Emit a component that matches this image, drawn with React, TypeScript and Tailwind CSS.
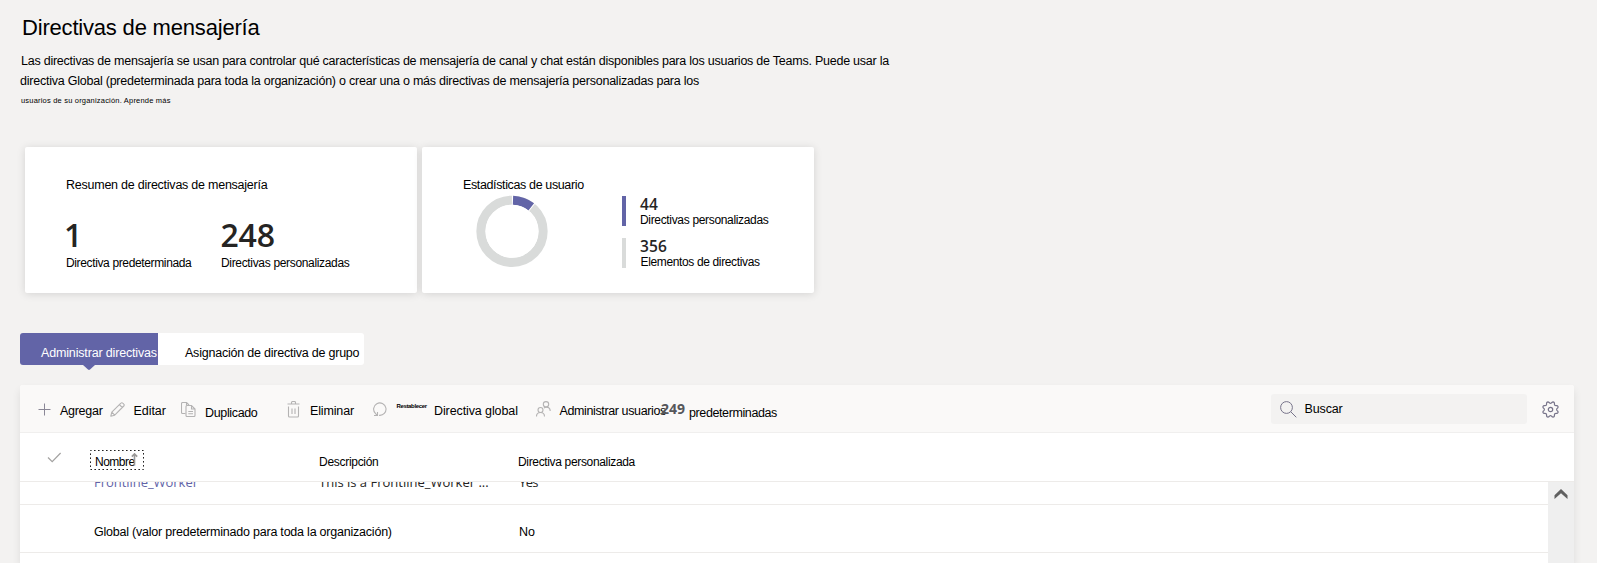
import type { ReactNode } from "react";

type IconProps = { className?: string };

const PlusIcon = ({ className = "" }: IconProps) => (
  <svg className={`h-[13px] w-[13px] shrink-0 ${className}`} viewBox="0 0 13 13" fill="none" stroke="currentColor">
    <path d="M6.5 0.5v12M0.5 6.5h12" />
  </svg>
);

const PencilIcon = ({ className = "" }: IconProps) => (
  <svg className={`h-[15px] w-[15px] shrink-0 ${className}`} viewBox="0 0 15 15" fill="none" stroke="currentColor" strokeWidth="1.1">
    <path d="M0.8 14.2l1-4L10.9 1.1a1.3 1.3 0 0 1 1.9 0l1 1a1.3 1.3 0 0 1 0 1.9L4.7 13.2zM9.4 2.6l2.9 2.9M1.8 10.2l2.9 3" strokeLinejoin="round" />
  </svg>
);

const CopyIcon = ({ className = "" }: IconProps) => (
  <svg className={`h-[15px] w-[15px] shrink-0 ${className}`} viewBox="0 0 15 15" fill="none" stroke="currentColor" strokeWidth="1.1">
    <path d="M4.5 11.5H1.5a1 1 0 0 1-1-1v-9a1 1 0 0 1 1-1h4l2.5 2.5M5.5 0.5V3.5" />
    <path d="M6 3.500h4.500l3.500 3.500v6.500a1 1 0 0 1-1 1H6a1 1 0 0 1-1-1v-9a1 1 0 0 1 1-1zM10.500 3.500V7H14M7.300 9.500h4.700M7.300 11.700h4.700" />
  </svg>
);

const TrashIcon = ({ className = "" }: IconProps) => (
  <svg className={`h-[17px] w-[13px] shrink-0 ${className}`} viewBox="0 0 13 17" fill="none" stroke="currentColor" strokeWidth="1.1">
    <path d="M0.500 3h12M4.500 3V1.500a1 1 0 0 1 1-1h2a1 1 0 0 1 1 1V3M1.500 5.500v9.500a1 1 0 0 0 1 1h8a1 1 0 0 0 1-1V5.500M5 7.500v5.500M8 7.500v5.500" />
  </svg>
);

const ResetIcon = ({ className = "" }: IconProps) => (
  <svg className={`h-[15px] w-[15px] shrink-0 ${className}`} viewBox="0 0 15 15" fill="none" stroke="currentColor" strokeWidth="1.1">
    <path d="M6 13.300a6.200 6.200 0 1 0-3.400-1.600L4 13.200" />
    <path d="M1 13.500h3.500V10" />
  </svg>
);

const PeopleIcon = ({ className = "" }: IconProps) => (
  <svg className={`h-[16px] w-[15px] shrink-0 ${className}`} viewBox="0 0 15 16" fill="none" stroke="currentColor" strokeWidth="1.1">
    <circle cx="10" cy="3.300" r="2.700" />
    <circle cx="4.500" cy="9" r="2.500" />
    <path d="M0.500 15.500c0-2.600 1.600-4 4-4s4 1.400 4 4M8 7c0.600-0.600 1.300-0.900 2.200-0.900 2.500 0 4 1.400 4 4" />
  </svg>
);

const SearchIcon = ({ className = "" }: IconProps) => (
  <svg className={`h-[17px] w-[17px] shrink-0 ${className}`} viewBox="0 0 17 17" fill="none" stroke="currentColor">
    <circle cx="6.500" cy="6.500" r="5.900" />
    <path d="M10.800 10.800l5.500 5.500" />
  </svg>
);

const GEAR_OUTLINE = Array.from({ length: 96 }, (_, i) => {
  const angle = (i / 96) * Math.PI * 2;
  const wave = Math.cos(8 * angle);
  const radius = 7.1 - 0.95 * Math.sign(wave) * Math.pow(Math.abs(wave), 0.6);
  return `${(8.5 + radius * Math.cos(angle)).toFixed(2)},${(8.5 + radius * Math.sin(angle)).toFixed(2)}`;
}).join(" ");

const GearIcon = ({ className = "" }: IconProps) => (
  <svg className={`h-[17px] w-[17px] shrink-0 ${className}`} viewBox="0 0 17 17" fill="none" stroke="currentColor" strokeWidth="1.2" strokeLinejoin="round">
    <circle cx="8.5" cy="8.5" r="2.2" />
    <polygon points={GEAR_OUTLINE} />
  </svg>
);

const CheckIcon = ({ className = "" }: IconProps) => (
  <svg className={`h-[11px] w-[15px] ${className}`} viewBox="0 0 15 11" fill="none" stroke="currentColor" strokeWidth="1.200">
    <path d="M1 5.500l4.200 4.200L13.600 1" />
  </svg>
);

const SortIcon = ({ className = "" }: IconProps) => (
  <svg className={`h-[13px] w-[7px] ${className}`} viewBox="0 0 7 13" fill="none" stroke="currentColor" strokeWidth="1.600">
    <path d="M3.500 12.500V1M0.800 3.600L3.500 0.900l2.700 2.700" />
  </svg>
);

function Donut() {
  return (
    <svg className="ml-[13px] h-[72px] w-[72px]" viewBox="0 0 72 72" fill="none">
      <circle cx="36" cy="36.300" r="31.100" stroke="#d9dbda" strokeWidth="9.100" />
      <path d="M36.500 36.300L36.500 0M36 36.300L59.400 7.400" stroke="#fff" strokeWidth="1.200" />
      <path d="M37 5.200A31.100 31.100 0 0 1 55.200 11.900" stroke="#6264a7" strokeWidth="9.100" />
      <circle cx="36" cy="36.300" r="26.500" fill="#fff" />
    </svg>
  );
}

function Legend({ value, label, bar, labelClass }: { value: string; label: string; bar: string; labelClass: string }) {
  return (
    <div className="flex h-[30px]">
      <div className={`h-[30px] w-[4px] ${bar}`} />
      <div className="ml-[14px]">
        <div className="font-['Open_Sans',sans-serif] text-[15.5px] leading-[17px] font-semibold tracking-[0.1px] text-[#252423]">{value}</div>
        <div className={`text-[12px] leading-[15px] ${labelClass}`}>{label}</div>
      </div>
    </div>
  );
}

function Action({ icon, label, cell, text }: { icon?: ReactNode; label: string; cell: string; text: string }) {
  return (
    <div className={`flex shrink-0 items-start text-[#b4b3b3] ${cell}`}>
      {icon}
      <span className={`text-black ${text}`}>{label}</span>
    </div>
  );
}

const COLUMNS = "grid grid-cols-[74px_225px_199px_1fr]";

export default function App() {
  return (
    <div className="h-[563px] w-full overflow-hidden bg-[#f3f2f1] pt-[12px] pl-[20px] font-['Liberation_Sans',sans-serif] text-[12.5px] leading-[20px] whitespace-nowrap text-black">
      <h1 className="ml-[2px] text-[22px] leading-[32px] tracking-[-0.19px]">Directivas de mensajería</h1>
      <p className="mt-[7px] ml-[1px] tracking-[-0.235px]">
        Las directivas de mensajería se usan para controlar qué características de mensajería de canal y chat están disponibles para los usuarios de Teams. Puede usar la
      </p>
      <p className="tracking-[-0.23px]">
        directiva Global (predeterminada para toda la organización) o crear una o más directivas de mensajería personalizadas para los
      </p>
      <p className="mt-[1px] ml-[1px] pt-[1px] text-[7.5px] leading-[15px] tracking-[0.196px]">usuarios de su organización. Aprende más</p>

      <section className="mt-[39px] ml-[5px] flex h-[146px] gap-[5px]">
        <div className="w-[392px] rounded-[2px] bg-white pt-[28px] pl-[41px] shadow-[0_1px_9px_rgba(0,0,0,0.13)]">
          <div className="tracking-[-0.24px]">Resumen de directivas de mensajería</div>
          <div className="mt-[22px] flex">
            <div className="w-[155px]">
              <div className="-ml-[2px] font-['Open_Sans',sans-serif] text-[32px] leading-[36px] font-semibold text-[#252423]">1</div>
              <div className="text-[12px] tracking-[-0.36px]">Directiva predeterminada</div>
            </div>
            <div>
              <div className="-ml-[0.5px] font-['Open_Sans',sans-serif] text-[32px] leading-[36px] font-semibold tracking-[-0.2px] text-[#252423]">248</div>
              <div className="text-[12px] tracking-[-0.33px]">Directivas personalizadas</div>
            </div>
          </div>
        </div>
        <div className="w-[392px] rounded-[2px] bg-white pt-[28px] pl-[41px] shadow-[0_1px_9px_rgba(0,0,0,0.13)]">
          <div className="tracking-[-0.37px]">Estadísticas de usuario</div>
          <div className="flex">
            <Donut />
            <div className="mt-[1px] ml-[74px] flex flex-col gap-[12px]">
              <Legend value="44" label="Directivas personalizadas" bar="bg-[#6264a7]" labelClass="tracking-[-0.33px]" />
              <Legend value="356" label="Elementos de directivas" bar="bg-[#d9dbda]" labelClass="ml-[0.5px] tracking-[-0.36px]" />
            </div>
          </div>
        </div>
      </section>

      <nav className="mt-[40px] flex h-[32px]">
        <div className="relative w-[138px] rounded-l-[3px] bg-[#6264a7] pt-[10px] pl-[21px] tracking-[-0.16px] text-white">
          Administrar directivas
          <svg className="absolute top-[32px] left-[63px] h-[5px] w-[12px]" viewBox="0 0 12 5">
            <path d="M0 0h12L7 4.500q-1 0.800-2 0z" fill="#6264a7" />
          </svg>
        </div>
        <div className="w-[206px] rounded-r-[3px] bg-white pt-[10px] pl-[27px] tracking-[-0.22px]">Asignación de directiva de grupo</div>
      </nav>

      <section className="mt-[20px] w-[1554px] rounded-t-[3px] bg-white shadow-[0_5px_8px_rgba(0,0,0,0.09)]">
        <div className="flex h-[48px] items-start rounded-t-[3px] border-b border-[#f0efee] bg-[#faf9f8] pl-[17.5px]">
          <Action icon={<PlusIcon className="mt-[18px] text-[#8a8796]" />} label="Agregar" cell="w-[72px]" text="mt-[16px] ml-[9.5px] tracking-[-0.28px]" />
          <Action icon={<PencilIcon className="mt-[17px]" />} label="Editar" cell="w-[71px]" text="mt-[16px] ml-[9px] tracking-[-0.05px]" />
          <Action icon={<CopyIcon className="mt-[17px]" />} label="Duplicado" cell="w-[106px]" text="mt-[18px] ml-[9.5px] tracking-[-0.35px]" />
          <Action icon={<TrashIcon className="mt-[16px]" />} label="Eliminar" cell="w-[86px]" text="mt-[16px] ml-[10.5px] tracking-[-0.15px]" />
          <Action icon={<ResetIcon className="mt-[17px]" />} label="Restablecer" cell="w-[60px]" text="mt-[16px] ml-[9px] text-[6px] leading-[10px] font-bold tracking-[-0.35px]" />
          <Action label="Directiva global" cell="w-[103px]" text="mt-[16px] ml-[1.5px] tracking-[-0.1px]" />
          <Action icon={<PeopleIcon className="mt-[16px]" />} label="Administrar usuarios" cell="w-[125.5px]" text="mt-[16px] ml-[9px] tracking-[-0.38px]" />
          <span className="mt-[14px] w-[28px] font-['Open_Sans',sans-serif] text-[14px] font-bold text-[#56575b]">249</span>
          <span className="mt-[18px] tracking-[-0.39px]">predeterminadas</span>
          <div className="mt-[9px] mr-[15px] ml-auto flex h-[30px] w-[256px] items-start rounded-[3px] bg-[#f3f2f1] text-[#77748a]">
            <SearchIcon className="mt-[7px] ml-[9px]" />
            <span className="mt-[5px] ml-[8px] tracking-[-0.13px] text-black">Buscar</span>
          </div>
          <GearIcon className="mt-[16px] mr-[15.5px] text-[#77748a]" />
        </div>

        <div className={`h-[49px] border-b border-[#edebe9] text-[12px] ${COLUMNS}`}>
          <CheckIcon className="mt-[19px] ml-[27px] text-[#a3a2a1]" />
          <div className="relative mt-[17px] -ml-[4px] h-[20px] w-[54px] pt-[2px] pl-[5px] tracking-[-0.5px]">
            Nombre
            <svg className="absolute inset-0 h-[20px] w-[54px]" viewBox="0 0 54 20" fill="none">
              <rect x="0.5" y="0.5" width="53" height="19" stroke="#222" strokeDasharray="1.6 2.4" strokeDashoffset="0.5" />
            </svg>
            <SortIcon className="absolute top-[3px] left-[41px] text-[#9a9897]" />
          </div>
          <div className="mt-[19px] tracking-[-0.29px]">Descripción</div>
          <div className="mt-[19px] tracking-[-0.34px]">Directiva personalizada</div>
        </div>

        <div className="flex h-[81px] overflow-hidden">
          <div className="flex-1">
            <div className={`h-[23px] overflow-hidden border-b border-[#edebe9] font-['Open_Sans',sans-serif] text-[13px] text-[#252423] ${COLUMNS}`}>
              <div className="col-start-2 -mt-[10px] tracking-[-0.04px] text-[#6264a7]">Frontline_Worker</div>
              <div className="-mt-[10px]">This is a Frontline_Worker ...</div>
              <div className="-mt-[10px] ml-[1px] tracking-[-0.6px]">Yes</div>
            </div>
            <div className={`h-[48px] border-b border-[#edebe9] ${COLUMNS}`}>
              <div className="col-start-2 mt-[17px] w-0 tracking-[-0.22px]">Global (valor predeterminado para toda la organización)</div>
              <div className="col-start-4 mt-[17px] ml-[1px]">No</div>
            </div>
          </div>
          <div className="w-[26px] bg-[#efefef]">
            <svg className="mt-[7px] ml-[6px] h-[10px] w-[14px]" viewBox="0 0 14 10">
              <path d="M7 0L13.500 6.300V10L7 4.200L0.500 10V6.300z" fill="#606060" />
            </svg>
          </div>
        </div>
      </section>
    </div>
  );
}
